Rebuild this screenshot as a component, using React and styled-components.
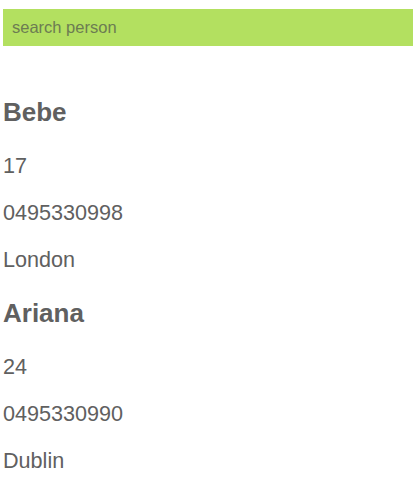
import React from 'react';
import styled, { createGlobalStyle } from 'styled-components';

const GlobalStyle = createGlobalStyle`
  body {
    margin: 0;
    background: #FFFFFF;
    font-family: "Liberation Sans", Arial, sans-serif;
  }
`;

const Page = styled.div`
  padding: 9px 0 0 3px;
  color: #606060;
`;

const SearchInput = styled.input`
  display: block;
  box-sizing: border-box;
  width: 100%;
  height: 37px;
  padding: 0 9px;
  border: none;
  outline: none;
  background: #B3E060;
  font-family: "Liberation Sans", Arial, sans-serif;
  font-size: 16.5px;
  color: #4A5A30;

  &::placeholder {
    color: #6C7C52;
  }
`;

const People = styled.div`
  padding-top: 26px;
`;

const Name = styled.h2`
  font-size: 26px;
  line-height: 29px;
  font-weight: bold;
  margin: 26px 0;
`;

const Detail = styled.p`
  font-size: 21.6px;
  line-height: 26px;
  margin: 21px 0;
`;

const people = [
  { name: 'Bebe', age: 17, phone: '0495330998', city: 'London' },
  { name: 'Ariana', age: 24, phone: '0495330990', city: 'Dublin' },
];

export default function App() {
  return (
    <Page>
      <GlobalStyle />
      <SearchInput placeholder="search person" />

      <People>
        {people.map((person) => (
          <React.Fragment key={person.name}>
            <Name>{person.name}</Name>
            <Detail>{person.age}</Detail>
            <Detail>{person.phone}</Detail>
            <Detail>{person.city}</Detail>
          </React.Fragment>
        ))}
      </People>
    </Page>
  );
}
